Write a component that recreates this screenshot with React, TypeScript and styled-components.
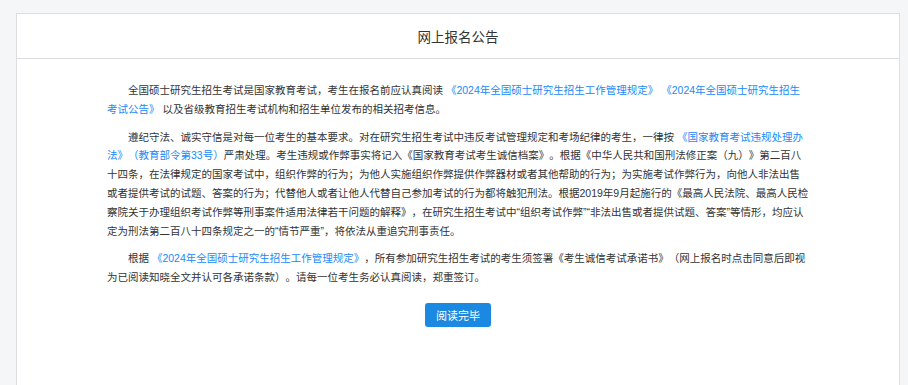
import React from 'react';
import styled, {createGlobalStyle} from 'styled-components';

const GlobalStyle = createGlobalStyle`
  html, body {
    margin: 0;
    padding: 0;
    background: #f5f6f8;
    font-family: "Liberation Sans", "Noto Sans CJK SC", sans-serif;
  }
`;

const Page = styled.div`
  padding: 13px 8px 0 16px;
  height: 385px;
  box-sizing: border-box;
  overflow: hidden;
`;

const Card = styled.div`
  background: #fff;
  border: 1px solid #dcdee2;
  border-bottom: none;
  height: 100%;
  box-sizing: border-box;
`;

const Header = styled.div`
  height: 44px;
  border-bottom: 1px solid #dcdee2;
  display: flex;
  align-items: center;
  justify-content: center;
  font-size: 13.5px;
  color: #333;
`;

const Body = styled.div`
  width: 702px;
  margin: 0 0 0 90px;
  padding: 22px 0 0;
  box-sizing: border-box;
`;

const Para = styled.p`
  margin: 0 0 9px;
  font-size: 10.5px;
  line-height: 18.8px;
  color: #333;
  text-indent: 2em;
  text-align: left;
  text-spacing-trim: space-all;
`;

const Link = styled.span`
  color: #1989fa;
  cursor: pointer;
`;

const Footer = styled.div`
  display: flex;
  justify-content: center;
  padding-top: 7px;
`;

const Button = styled.button`
  width: 66px;
  height: 24px;
  border: none;
  border-radius: 3px;
  background: #1b89e1;
  color: #fff;
  font-family: inherit;
  font-size: 11px;
  padding: 0;
  cursor: pointer;
`;

export default function App() {
  return (
    <>
      <GlobalStyle />
      <Page>
        <Card>
          <Header>网上报名公告</Header>
          <Body>
            <Para>
              全国硕士研究生招生考试是国家教育考试，考生在报名前应认真阅读{' '}
              <Link>《2024年全国硕士研究生招生工作管理规定》</Link>{' '}
              <Link>《2024年全国硕士研究生招生考试公告》</Link>{' '}
              以及省级教育招生考试机构和招生单位发布的相关招考信息。
            </Para>
            <Para>
              遵纪守法、诚实守信是对每一位考生的基本要求。对在研究生招生考试中违反考试管理规定和考场纪律的考生，一律按{' '}
              <Link>《国家教育考试违规处理办法》（教育部令第33号）</Link>
              严肃处理。考生违规或作弊事实将记入《国家教育考试考生诚信档案》。根据《中华人民共和国刑法修正案（九）》第二百八十四条，在法律规定的国家考试中，组织作弊的行为；为他人实施组织作弊提供作弊器材或者其他帮助的行为；为实施考试作弊行为，向他人非法出售或者提供考试的试题、答案的行为；代替他人或者让他人代替自己参加考试的行为都将触犯刑法。根据2019年9月起施行的《最高人民法院、最高人民检察院关于办理组织考试作弊等刑事案件适用法律若干问题的解释》，在研究生招生考试中“组织考试作弊”“非法出售或者提供试题、答案”等情形，均应认定为刑法第二百八十四条规定之一的“情节严重”，将依法从重追究刑事责任。
            </Para>
            <Para>
              根据{' '}
              <Link>《2024年全国硕士研究生招生工作管理规定》</Link>
              ，所有参加研究生招生考试的考生须签署《考生诚信考试承诺书》（网上报名时点击同意后即视为已阅读知晓全文并认可各承诺条款）。请每一位考生务必认真阅读，郑重签订。
            </Para>
            <Footer>
              <Button>阅读完毕</Button>
            </Footer>
          </Body>
        </Card>
      </Page>
    </>
  );
}
